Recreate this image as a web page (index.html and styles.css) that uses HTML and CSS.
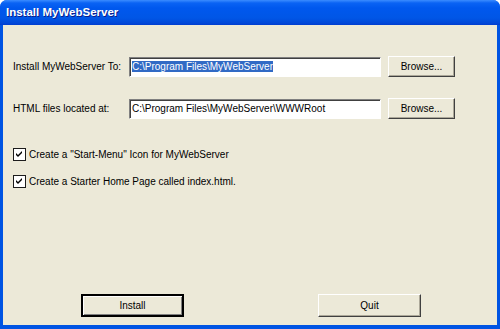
FILE: index.html
```html
<!DOCTYPE html>
<html lang="en">
<head>
  <meta charset="UTF-8" />
  <title>Install MyWebServer</title>
  <link rel="stylesheet" href="styles.css">
</head>
<body>
  <div class="window">
    <div class="titlebar">Install MyWebServer</div>

    <div class="client">
      <div class="row">
        <label class="label">Install MyWebServer To:</label>
        <div class="field"><span class="sel">C:\Program Files\MyWebServer</span></div>
        <button class="btn browse">Browse...</button>
      </div>

      <div class="row second">
        <label class="label">HTML files located at:</label>
        <div class="field">C:\Program Files\MyWebServer\WWWRoot</div>
        <button class="btn browse">Browse...</button>
      </div>

      <div class="check first">
        <span class="box">
          <svg width="7" height="7" viewBox="0 0 7 7"><path d="M0 2 L2 4 L6 0 L6 2 L2 6 L0 4 Z" fill="#000"/></svg>
        </span>
        <span>Create a "Start-Menu" Icon for MyWebServer</span>
      </div>

      <div class="check">
        <span class="box">
          <svg width="7" height="7" viewBox="0 0 7 7"><path d="M0 2 L2 4 L6 0 L6 2 L2 6 L0 4 Z" fill="#000"/></svg>
        </span>
        <span>Create a Starter Home Page called index.html.</span>
      </div>

      <div class="actions">
        <button class="btn big default">Install</button>
        <button class="btn big">Quit</button>
      </div>
    </div>
  </div>
</body>
</html>
```

FILE: styles.css
```css
* { margin: 0; padding: 0; box-sizing: border-box; }

body {
  background: #fff;
  font-family: "Liberation Sans", Arial, sans-serif;
  font-size: 10px;
  color: #000;
}

.window {
  width: 500px;
  height: 329px;
  background: #0054e3;
  border-radius: 7px 7px 0 0;
  display: flex;
  flex-direction: column;
  overflow: hidden;
}

.titlebar {
  height: 25px;
  flex: none;
  padding: 6px 0 0 6px;
  color: #fff;
  font-weight: bold;
  font-size: 11.5px;
  text-shadow: 1px 1px 0 #0a1e8c;
  background: linear-gradient(#3b8cff 0, #0a63f4 3px, #0058ee 8px, #0056e6 18px, #0148d8 23px, #003dd0 25px);
}

.client {
  flex: 1;
  margin: 0 3px 4px;
  background: #ece9d8;
  display: flex;
  flex-direction: column;
  padding: 31px 0 8px 10px;
}

.row {
  display: flex;
  align-items: center;
  height: 21px;
}
.row.second { margin-top: 21px; }

.label { width: 116px; white-space: nowrap; }

.field {
  width: 252px;
  height: 20px;
  background: #fff;
  border: 1px solid;
  border-color: #808080 #fff #fff #808080;
  box-shadow: inset 1px 1px 0 #404040;
  padding: 3px 0 0 2px;
  white-space: nowrap;
  overflow: hidden;
}
.sel { background: #316ac5; color: #fff; }

.btn {
  font: inherit;
  background: #ece9d8;
  color: #000;
  border: 1px solid;
  border-color: #fff #404040 #404040 #fff;
  box-shadow: inset -1px -1px 0 #aca899;
}
.browse { width: 67px; height: 21px; margin-left: 7px; }

.check {
  display: flex;
  align-items: center;
  gap: 3px;
  height: 13px;
}
.check.first { margin-top: 29px; }
.check + .check { margin-top: 14px; }

.box {
  width: 13px;
  height: 13px;
  background: #fff;
  border: 1px solid #1c1c1c;
  display: flex;
  align-items: center;
  justify-content: center;
}

.actions {
  margin-top: auto;
  display: flex;
  padding-left: 68px;
  gap: 134px;
}
.big { width: 103px; height: 23px; }
.default {
  border: 2px solid #000;
  box-shadow: inset 1px 1px 0 #fff, inset -1px -1px 0 #808080;
}
```
